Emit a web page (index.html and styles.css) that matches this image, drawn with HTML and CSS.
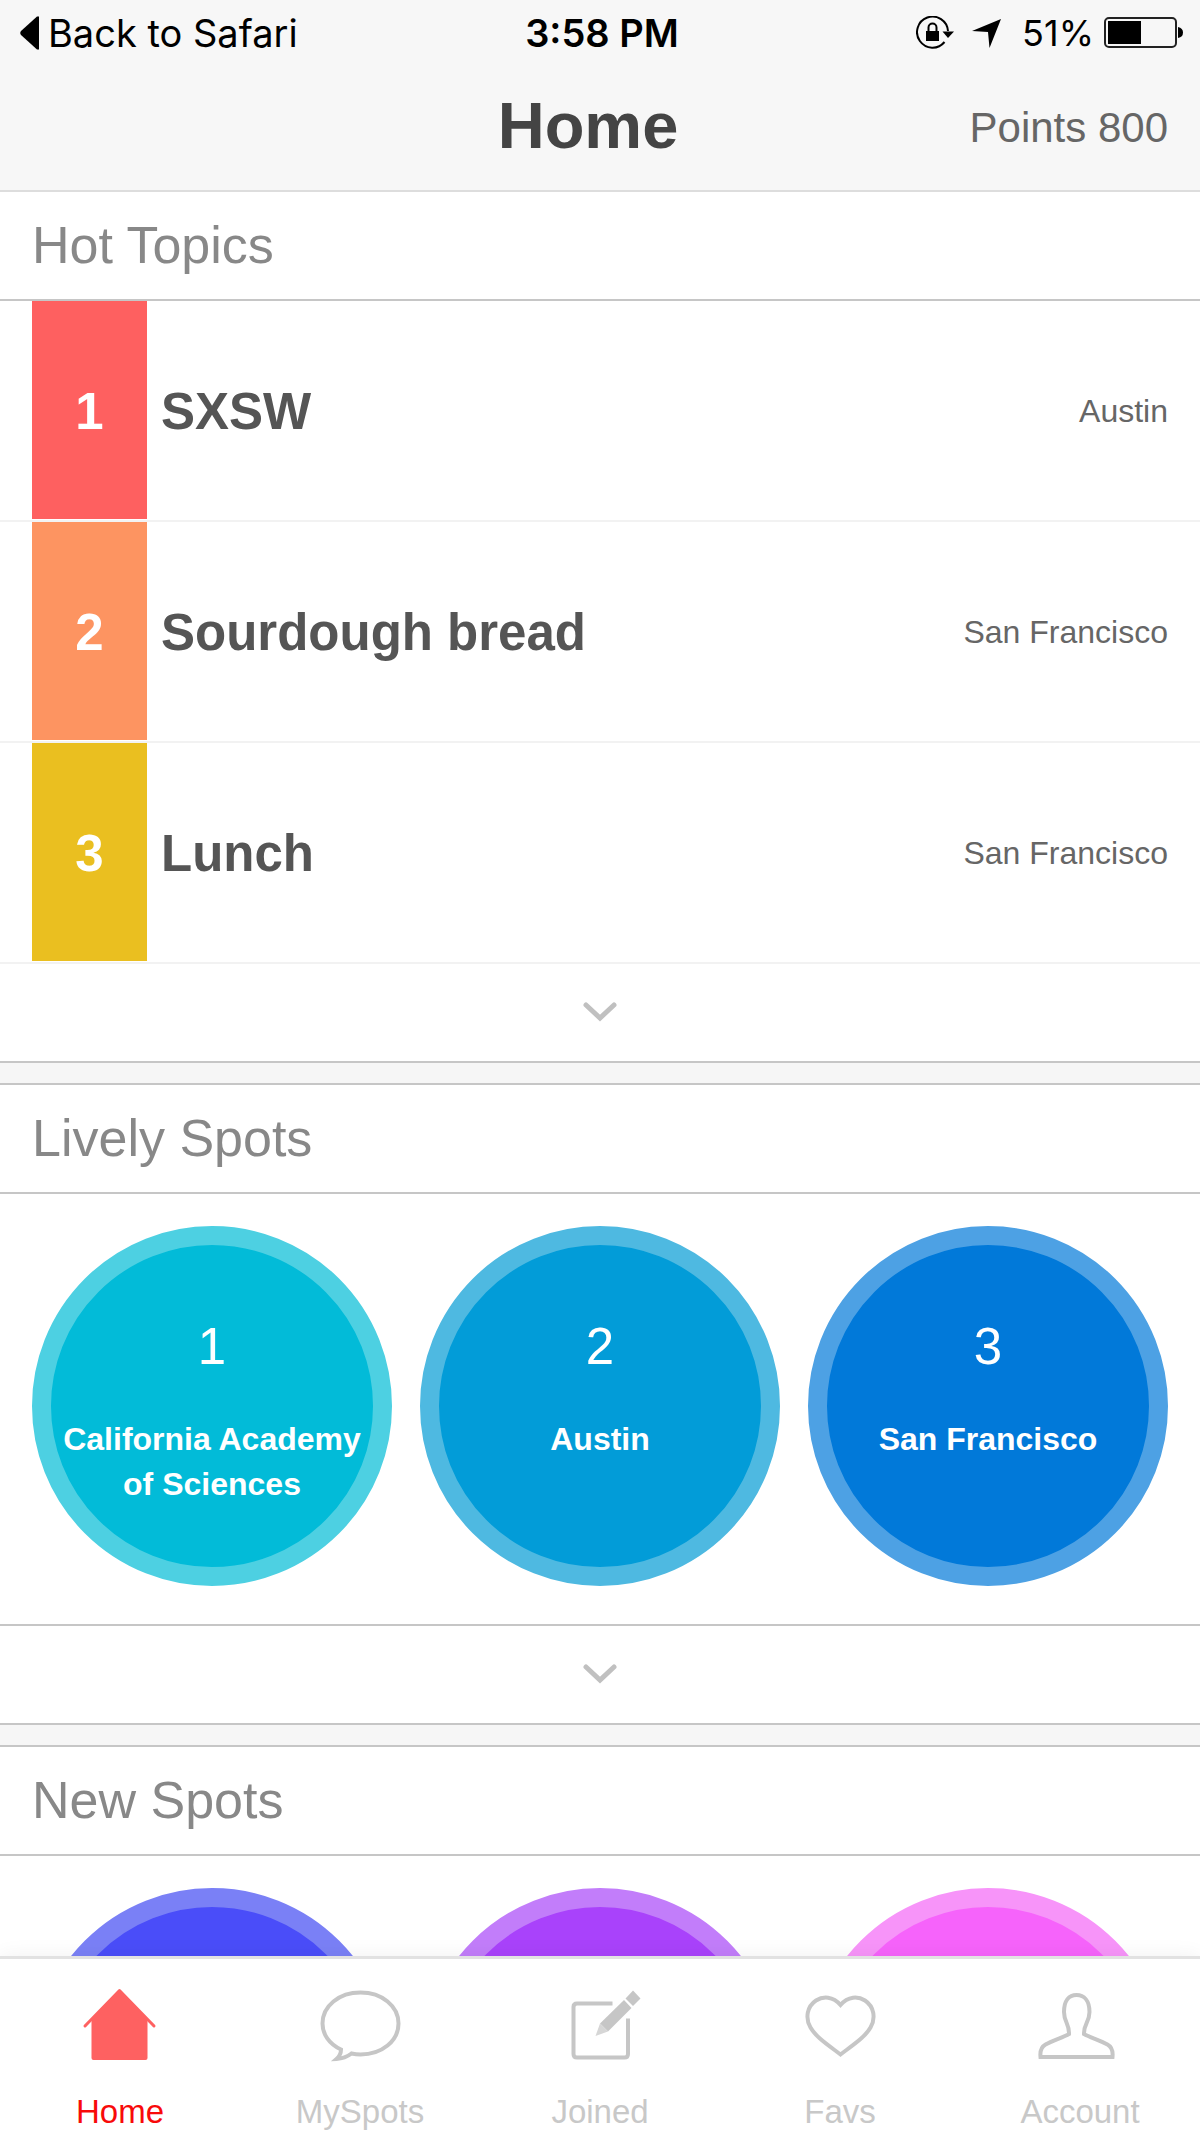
FILE: index.html
```html
<!DOCTYPE html>
<html lang="en">
<head>
    <meta charset="UTF-8">
    <meta name="viewport" content="width=device-width, initial-scale=1.0">
    <title>Home</title>
    <link rel="stylesheet" href="styles.css">
</head>
<body>
    <header class="header">
        <div class="status-bar">
            <a class="back" href="#">
                <svg width="20" height="34" viewBox="0 0 20 34"><path d="M19 0.5V33.5H17L1 19Q-0.5 17 1 15L17 0.5Z"/></svg>
                Back to Safari
            </a>
            <span class="time">3:58 PM</span>
            <div class="indicators">
                <svg width="38" height="34" viewBox="0 0 38 34">
                    <path d="M32 15A15.5 15.5 0 1 0 28.5 26" fill="none" stroke="#000" stroke-width="2"/>
                    <path d="M26.5 15.5H38L32 22Z"/>
                    <rect x="10" y="15" width="13" height="10"/>
                    <path d="M12.5 16V11.500A4 4 0 0 1 20.5 11.500V16" fill="none" stroke="#000" stroke-width="2"/>
                </svg>
                <svg class="location" width="30" height="30" viewBox="0 0 30 30"><path d="M29 1L17.5 30L16 14L0 13Z"/></svg>
                <span>51%</span>
                <svg class="battery" width="80" height="32" viewBox="0 0 80 32">
                    <rect x="1" y="1" width="71" height="29" rx="4" fill="none" stroke="#222" stroke-width="2"/>
                    <rect x="4" y="4" width="33" height="23"/>
                    <path d="M74 10Q79 11 79 15.5Q79 20 74 21Z"/>
                </svg>
            </div>
        </div>
        <div class="title-bar">
            <h1>Home</h1>
            <span class="points">Points 800</span>
        </div>
    </header>

    <main class="content">
        <section class="panel">
            <h2>Hot Topics</h2>
            <ol class="topics">
                <li class="topic">
                    <span class="rank red">1</span>
                    <span class="name">SXSW</span>
                    <span class="place">Austin</span>
                </li>
                <li class="topic">
                    <span class="rank orange">2</span>
                    <span class="name">Sourdough bread</span>
                    <span class="place">San Francisco</span>
                </li>
                <li class="topic">
                    <span class="rank yellow">3</span>
                    <span class="name">Lunch</span>
                    <span class="place">San Francisco</span>
                </li>
            </ol>
            <button class="more" aria-label="More topics">
                <svg width="34" height="20" viewBox="0 0 34 20"><path d="M3 3L17 16L31 3"/></svg>
            </button>
        </section>

        <section class="panel">
            <h2>Lively Spots</h2>
            <div class="spots">
                <a class="spot cyan" href="#">
                    <span class="number">1</span>
                    <span class="spot-name">California Academy of Sciences</span>
                </a>
                <a class="spot sky" href="#">
                    <span class="number">2</span>
                    <span class="spot-name">Austin</span>
                </a>
                <a class="spot blue" href="#">
                    <span class="number">3</span>
                    <span class="spot-name">San Francisco</span>
                </a>
            </div>
            <button class="more lined" aria-label="More lively spots">
                <svg width="34" height="20" viewBox="0 0 34 20"><path d="M3 3L17 16L31 3"/></svg>
            </button>
        </section>

        <section class="panel">
            <h2>New Spots</h2>
            <div class="spots">
                <a class="spot indigo" href="#"></a>
                <a class="spot purple" href="#"></a>
                <a class="spot pink" href="#"></a>
            </div>
        </section>
    </main>

    <nav class="tabs">
        <a class="tab active" href="#">
            <svg width="84" height="84" viewBox="0 0 84 84">
                <path d="M41.5 10L13.5 39V78Q13.5 80 15.5 80H67.5Q69.5 80 69.5 78V39Z" fill="#fe6161"/>
                <path d="M7 46L41.5 10.5L76 46" fill="none" stroke="#fe6161" stroke-width="3" stroke-linecap="round" stroke-linejoin="round"/>
            </svg>
            Home
        </a>
        <a class="tab" href="#">
            <svg class="line" width="84" height="84" viewBox="0 0 84 84">
                <path d="M23 69.5C11 64 4.5 54 4.5 43.5C4.5 26 21 12.5 42.5 12.5S80.5 26 80.5 43.5S64 74.5 42.5 74.5Q38 74.5 33.5 73.5Q27 78.5 18.5 79Q23 75 23 69.5Z"/>
            </svg>
            MySpots
        </a>
        <a class="tab" href="#">
            <svg class="line" width="84" height="84" viewBox="0 0 84 84">
                <path d="M54.5 23.5H19Q15.5 23.5 15.5 27V74Q15.5 77.5 19 77.5H66.5Q70 77.5 70 74V38.5"/>
                <path class="solid" d="M42 43.5L66 20L73.5 28L50 51.5Z"/>
                <path class="solid" d="M75 10.5L82.5 18.5L75 26L67.5 18.5Z"/>
                <path class="lead" d="M42 43.5L37.5 56L50 51.5Z"/>
            </svg>
            Joined
        </a>
        <a class="tab" href="#">
            <svg class="line" width="84" height="84" viewBox="0 0 84 84">
                <path d="M42.5 25C35 16 25 16 18 20.5C9 26.5 7 38 12.5 47.5C18 57 28 63.5 42.5 74.5C57 63.5 67 57 72.5 47.5C78 38 76 26.5 67 20.5C60 16 50 16 42.5 25Z"/>
            </svg>
            Favs
        </a>
        <a class="tab" href="#">
            <svg class="line" width="84" height="84" viewBox="0 0 84 84">
                <path d="M38.5 15C31 15 26 20.5 26 32C26 42 31.5 44 31 54C25 57.5 14 60.5 7.5 64.5C3 67 2 72 2.5 77H74.5C75 72 74 67 69.5 64.5C63 60.5 52 57.5 46 54C45.5 44 51.5 42 51.5 32C51.5 20.5 46 15 38.5 15Z"/>
            </svg>
            Account
        </a>
    </nav>
</body>
</html>
```
FILE: styles.css
```css
* {
    box-sizing: border-box;
}
body {
    display: flex;
    flex-direction: column;
    height: 100vh;
    margin: 0;
    background-color: #f6f6f6;
    color: #555;
    font-family: "Liberation Sans", Arial, sans-serif;
    font-size: 32px;
}
a {
    color: inherit;
    text-decoration: none;
}
h1, h2 {
    margin: 0;
}
.header {
    background-color: #f7f7f7;
    border-bottom: 2px solid #ddd;
}

/* status bar */
.status-bar {
    display: grid;
    grid-template-columns: 1fr auto 1fr;
    align-items: center;
    height: 66px;
    padding: 0 16px 0 20px;
    color: #000;
    font-family: Inter, Roboto, sans-serif;
    font-size: 38px;
}
.back {
    display: flex;
    align-items: center;
    gap: 8px;
}
.time {
    font-weight: 600;
}
.indicators {
    display: flex;
    align-items: center;
    justify-content: flex-end;
    font-size: 36px;
}
.location {
    margin: 0 20px 0 18px;
}
.battery {
    margin-left: 10px;
}
.title-bar {
    display: grid;
    grid-template-columns: 1fr auto 1fr;
    align-items: center;
    height: 124px;
    padding: 0 32px 0 8px;
}
.title-bar h1 {
    grid-column: 2;
    padding-bottom: 6px;
    color: #444;
    font-size: 65px;
}
.points {
    color: #666;
    font-size: 42px;
    text-align: right;
}

.content {
    flex: 1;
    min-height: 0;
    overflow-y: auto;
    scrollbar-width: none;
}
.panel {
    margin-bottom: 20px;
    background-color: #fff;
    border-top: 2px solid #c6c6c6;
    border-bottom: 2px solid #c6c6c6;
}
.panel:first-child {
    border-top: none;
}
.panel h2 {
    padding: 0 32px;
    border-bottom: 2px solid #c6c6c6;
    color: #888;
    font-size: 52px;
    font-weight: normal;
    line-height: 107px;
}

/* hot topics */
.topics {
    margin: 0;
    padding: 0;
    list-style: none;
}
.topic {
    display: flex;
    align-items: center;
    height: 221px;
    padding: 0 32px 1px;
    border-bottom: 2px solid #f2f2f2;
}
.topic span {
    padding-top: 3px;
}
.rank {
    display: flex;
    align-items: center;
    justify-content: center;
    align-self: stretch;
    width: 115px;
    margin-right: 14px;
    color: #fff;
    font-size: 51px;
    font-weight: bold;
}
.red {
    background-color: #fe6060;
}
.orange {
    background-color: #fd9461;
}
.yellow {
    background-color: #eabf20;
}
.name {
    flex: 1;
    font-size: 51px;
    font-weight: bold;
}
.place {
    color: #666;
}
.more {
    display: flex;
    align-items: center;
    justify-content: center;
    width: 100%;
    height: 97px;
    padding: 0 0 2px;
    border: none;
    background: none;
    cursor: pointer;
}
.more path {
    fill: none;
    stroke: #c0c0c0;
    stroke-width: 5;
    stroke-linecap: round;
}
.lined {
    height: 99px;
    border-top: 2px solid #c6c6c6;
}

/* spots */
.spots {
    display: grid;
    grid-template-columns: repeat(3, 1fr);
    gap: 28px;
    padding: 32px 32px 38px;
}
.spot {
    display: flex;
    flex-direction: column;
    align-items: center;
    aspect-ratio: 1;
    padding-top: 73px;
    border: 19px solid;
    border-radius: 50%;
    text-align: center;
}
.number {
    margin-bottom: 41px;
    color: #fff;
    font-size: 51px;
    line-height: 58px;
}
.spot-name {
    color: #fff;
    font-weight: bold;
    line-height: 45px;
}
.cyan {
    background-color: #02bbd8;
    border-color: #4dd0e2;
}
.sky {
    background-color: #029cd8;
    border-color: #4eb9e1;
}
.blue {
    background-color: #0179d9;
    border-color: #4da1e4;
}
.indigo {
    background-color: #4a4df9;
    border-color: #7a80f6;
}
.purple {
    background-color: #a942fb;
    border-color: #c27dfa;
}
.pink {
    background-color: #f663fb;
    border-color: #f794f9;
}

/* tab bar */
.tabs {
    position: relative;
    display: grid;
    grid-template-columns: repeat(5, 1fr);
    padding: 21px 0 4px;
    background-color: #fff;
    border-top: 3px solid #e2e2e2;
    box-shadow: 0 0 20px rgba(0, 0, 0, 0.06);
}
.tab {
    display: flex;
    flex-direction: column;
    align-items: center;
    gap: 29px;
    color: #c8c8c8;
    font-size: 33px;
    line-height: 38px;
}
.tab.active {
    color: #f80a0a;
}
.line path {
    fill: none;
    stroke: #c6c6c6;
    stroke-width: 4;
}
.line .solid {
    fill: #c6c6c6;
    stroke: none;
}
.line .lead {
    fill: #d6d6d6;
    stroke: none;
}
```
